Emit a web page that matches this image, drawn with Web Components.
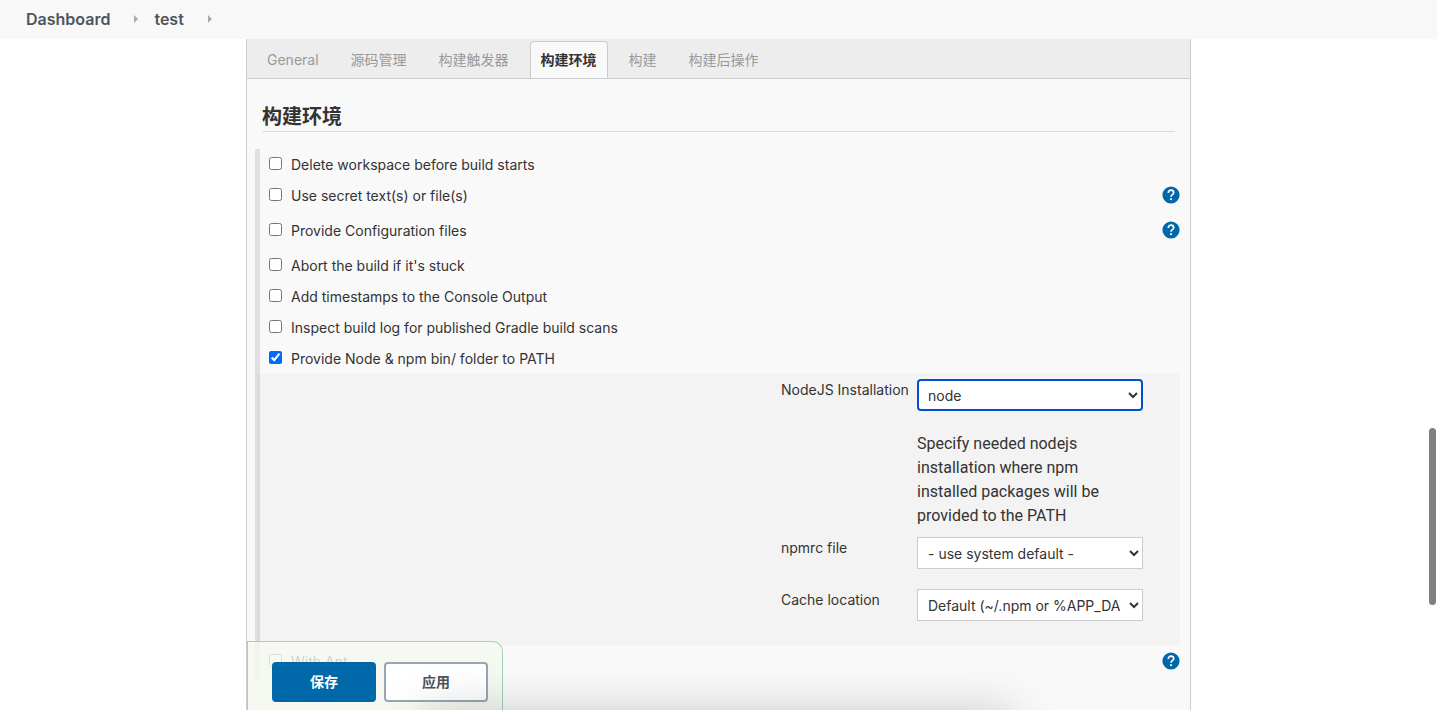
<!DOCTYPE html>
<html lang="zh-CN">
<head>
<meta charset="utf-8">
<title>test Config [Jenkins]</title>
<style>
  html, body { height: 100%; margin: 0; }
  body {
    overflow: hidden;
    background: #fff;
    color: #333;
    font: 14px/20px Inter, "Noto Sans CJK SC", sans-serif;
  }
</style>
</head>
<body>
<jenkins-page>
  <bread-crumbs slot="header"></bread-crumbs>
  <config-tabs slot="tabs"></config-tabs>
  <config-section>
    <span slot="title">构建环境</span>
    <option-row>Delete workspace before build starts</option-row>
    <option-row help>Use secret text(s) or file(s)</option-row>
    <option-row help>Provide Configuration files</option-row>
    <option-row>Abort the build if it's stuck</option-row>
    <option-row>Add timestamps to the Console Output</option-row>
    <option-row>Inspect build log for published Gradle build scans</option-row>
    <option-row checked>Provide Node &amp; npm bin/ folder to PATH</option-row>
    <option-details>
      <select-field label="NodeJS Installation" value="node" active>Specify needed nodejs installation where npm installed packages will be provided to the PATH</select-field>
      <select-field label="npmrc file" value="- use system default -"></select-field>
      <select-field label="Cache location" value="Default (~/.npm or %APP_DATA%\npm-cache)"></select-field>
    </option-details>
    <option-row help>With Ant</option-row>
  </config-section>
  <save-bar slot="actions"></save-bar>
</jenkins-page>

<script>
class Base extends HTMLElement {
  render(html) { this.attachShadow({ mode: "open" }).innerHTML = html; }
}

customElements.define("jenkins-page", class extends Base {
  connectedCallback() {
    this.render(`
      <style>
        :host { display: flex; flex-direction: column; height: 100vh; position: relative; overflow: hidden; }
        main {
          flex: 1; min-height: 0; box-sizing: border-box; position: relative;
          width: 100%; max-width: 945px; margin: 0 auto;
          background: #f9f9f9; border: solid #ccc; border-width: 0 1px;
        }
        .actions { position: absolute; left: 0; bottom: 0; }
        .thumb { position: absolute; right: 1px; top: 428px; width: 7px; height: 177px; border-radius: 4px; background: #808080; }
        .dock { position: absolute; left: 30%; right: 30%; top: 100%; height: 40px; box-shadow: 0 8px 48px 8px rgba(0,0,0,.18); pointer-events: none; }
      </style>
      <slot name="header"></slot>
      <main>
        <slot name="tabs"></slot>
        <slot></slot>
        <div class="actions"><slot name="actions"></slot></div>
      </main>
      <div class="thumb"></div>
      <div class="dock"></div>`);
  }
});

customElements.define("bread-crumbs", class extends Base {
  connectedCallback() {
    const arrow = `<svg width="4" height="8" viewBox="0 0 4 8" aria-hidden="true"><path d="M0 0L4 4L0 8Z" fill="#aaa"/></svg>`;
    this.render(`
      <style>
        :host { display: block; background: #f8f8f8; }
        nav { display: flex; align-items: center; height: 37px; padding: 0 0 2px 26px; }
        a { color: #4d545d; font-size: 16px; font-weight: 600; text-decoration: none; }
        svg { margin: 0 16px 0 24px; }
      </style>
      <nav><a href="#">Dashboard</a>${arrow}<a href="#">test</a>${arrow}</nav>`);
  }
});

customElements.define("config-tabs", class extends Base {
  connectedCallback() {
    const tabs = ["General", "源码管理", "构建触发器", "构建环境", "构建", "构建后操作"];
    this.render(`
      <style>
        :host { display: block; }
        nav { display: flex; gap: 10px; height: 37px; padding: 2px 9px 0; background: #ededed; border-bottom: 1px solid #ccc; }
        a { padding: 8px 10px 0; border: 1px solid transparent; border-bottom: 0; color: #999; text-decoration: none; white-space: nowrap; }
        a.on { color: #333; font-weight: 700; background: #f9f9f9; border-color: #ccc; border-radius: 4px 4px 0 0; }
      </style>
      <nav>${tabs.map((t, i) => `<a href="#"${i === 3 ? ' class="on"' : ""}>${t}</a>`).join("")}</nav>`);
  }
});

customElements.define("config-section", class extends Base {
  connectedCallback() {
    this.render(`
      <style>
        :host { display: block; }
        h2 { margin: 24px 15px 17px; border-bottom: 1px solid #ddd; font-size: 20px; line-height: 28px; font-weight: 700; }
        .list { margin: 0 10px 0 8px; border-left: 5px solid #e0e0e0; }
      </style>
      <h2><slot name="title"></slot></h2>
      <div class="list"><slot></slot></div>`);
  }
});

customElements.define("option-row", class extends Base {
  connectedCallback() {
    const help = this.hasAttribute("help") ? `
      <button type="button" aria-label="Help">
        <svg width="18" height="18" viewBox="0 0 18 18"><circle cx="9" cy="9" r="8.6" fill="#0067a8"/>
        <path d="M6.3 7C6.3 5.2 7.5 4.2 9 4.2s2.7 1 2.7 2.5c0 1.9-2.7 2-2.7 4" fill="none" stroke="#fff" stroke-width="1.7"/><rect x="8.1" y="12.2" width="1.8" height="1.9" fill="#fff"/></svg>
      </button>` : "";
    this.render(`
      <style>
        :host { display: flex; align-items: flex-start; height: 31px; }
        :host([help]) { height: 35px; }
        input { width: 13px; height: 13px; margin: 8px 9px 0; accent-color: #0069ff; }
        label { padding-top: 6px; flex: 1; }
        button { display: flex; margin: 6px 0 0; padding: 0; border: 0; background: none; }
      </style>
      <input type="checkbox" id="box"${this.hasAttribute("checked") ? " checked" : ""}>
      <label for="box"><slot></slot></label>${help}`);
  }
});

customElements.define("option-details", class extends Base {
  connectedCallback() {
    this.render(`
      <style>
        :host { display: flex; flex-direction: column; align-items: flex-end; margin-left: -3px; padding: 5px 37px 5px 0; background: rgba(0,0,0,.025); }
      </style>
      <slot></slot>`);
  }
});

customElements.define("select-field", class extends Base {
  connectedCallback() {
    const label = this.getAttribute("label"), value = this.getAttribute("value");
    this.render(`
      <style>
        :host { display: grid; grid-template-columns: 136px 226px; padding-bottom: 20px; }
        :host([active]) { padding-bottom: 10px; }
        label { padding-top: 1px; }
        select {
          width: 100%; height: 32px; padding: 0 6px; border: 1px solid #ccc; border-radius: 0;
          background: #fff; color: #333; font: inherit; outline: none;
        }
        :host([active]) select { border: 2px solid #0050d0; border-radius: 4px; padding: 0 5px; }
        p { grid-column: 2; margin: 21px 20px 0 0; margin-bottom: -1px; font: 16px/24px Roboto, sans-serif; }
      </style>
      <label for="field">${label}</label>
      <select id="field"><option>${value}</option></select>
      ${this.textContent ? "<p><slot></slot></p>" : ""}`);
  }
});

customElements.define("save-bar", class extends Base {
  connectedCallback() {
    this.render(`
      <style>
        :host {
          display: flex; gap: 8px; padding: 20px 14px 8px 24px;
          border: 1px solid #a3d0b8; border-bottom: 0; border-radius: 0 10px 0 0;
          background: rgba(245,249,240,.8);
        }
        button { width: 104px; height: 40px; padding: 0; border: 2px solid #98a5b3; border-radius: 4px; background: #fff; color: #4d545d; font: inherit; font-weight: 700; }
        .primary { border-color: #0067a8; background: #0067a8; color: #fff; }
      </style>
      <button type="button" class="primary">保存</button>
      <button type="button">应用</button>`);
  }
});
</script>
</body>
</html>
